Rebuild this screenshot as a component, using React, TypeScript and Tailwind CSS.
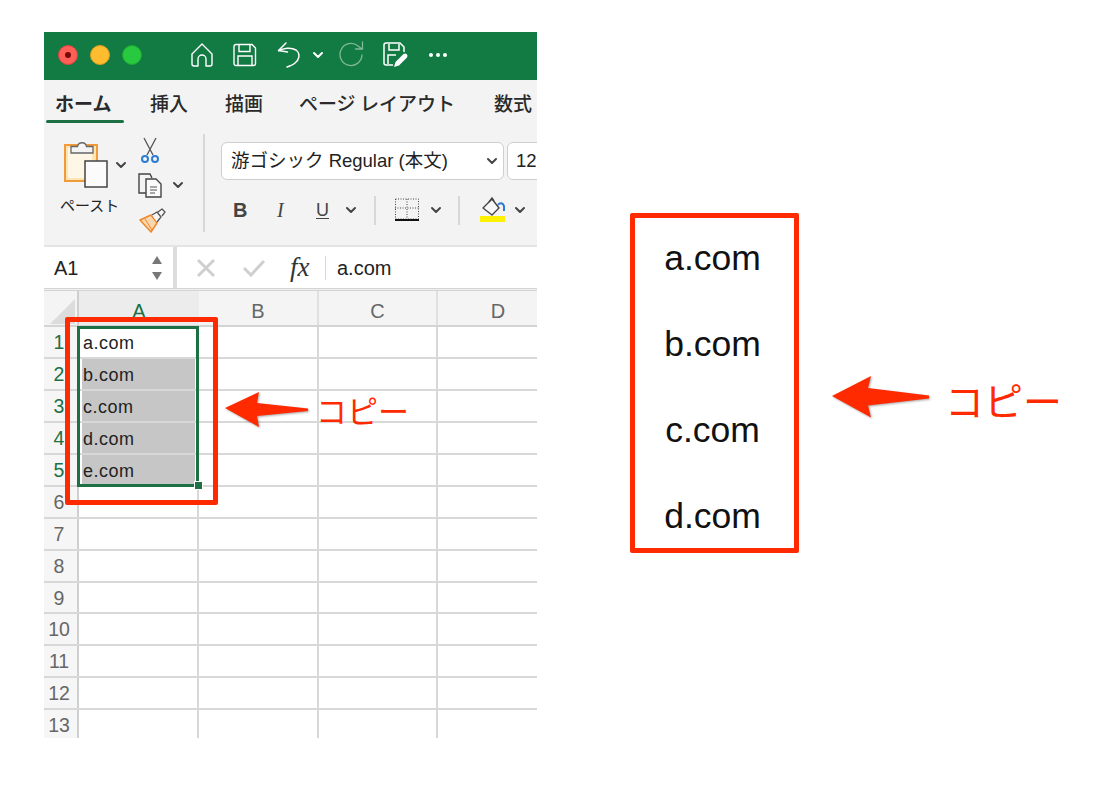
import React from "react";

const UI = "font-['Noto_Sans_CJK_JP',sans-serif]";
const LATIN = "font-['Liberation_Sans','Noto_Sans_CJK_JP',sans-serif]";

function Chevron({ className = "", color = "#444" }: { className?: string; color?: string }) {
  return (
    <svg width="12" height="8" viewBox="0 0 12 8" className={className}>
      <path d="M2 2l4 4 4-4" fill="none" stroke={color} strokeWidth="2" strokeLinecap="round" strokeLinejoin="round" />
    </svg>
  );
}

function TitleIcons() {
  return (
    <div className="flex items-center">
      <svg width="24" height="26" viewBox="0 0 24 26" className="ml-[48px]">
        <path d="M2 12L12 2l10 10v10a2 2 0 0 1-2 2h-4v-7a4 4 0 0 0-8 0v7H4a2 2 0 0 1-2-2z" fill="none" stroke="#fff" strokeWidth="1.4" strokeLinejoin="round" />
      </svg>
      <svg width="24" height="24" viewBox="0 0 24 24" className="ml-[19px]">
        <path d="M3 1.500h16l3.500 3.500v15.500a2 2 0 0 1-2 2H3a2 2 0 0 1-2-2v-17a2 2 0 0 1 2-2z" fill="none" stroke="#fff" strokeWidth="1.4" />
        <path d="M6 2v6.500h11V2M5 22v-9h14v9" fill="none" stroke="#fff" strokeWidth="1.4" />
      </svg>
      <svg width="26" height="28" viewBox="0 0 26 28" className="ml-[19px]">
        <path d="M10 2L2.500 9.500l9 1.500M3 10c4-3 12-4 17-1 5 4 3 10-1 13-2 2-5 3-8 4" fill="none" stroke="#fff" strokeWidth="1.500" strokeLinecap="round" strokeLinejoin="round" />
      </svg>
      <Chevron color="#fff" className="ml-[10px]" />
      <svg width="28" height="28" viewBox="0 0 28 28" className="ml-[14px]">
        <path d="M24 14a11 11 0 1 1-4-9l3.500 2.500M24.500 1v7h-7" fill="none" stroke="#7fb89a" strokeWidth="1.300" strokeLinecap="round" strokeLinejoin="round" />
      </svg>
      <svg width="26" height="26" viewBox="0 0 26 26" className="ml-[17px]">
        <path d="M10 23H3a2 2 0 0 1-2-2V3a2 2 0 0 1 2-2h14l4 4v5" fill="none" stroke="#fff" strokeWidth="1.500" />
        <path d="M6 2v6h10V2M5 22v-9h8" fill="none" stroke="#fff" strokeWidth="1.500" />
        <path d="M11 25l1.500-5 8-8a2.500 2.500 0 0 1 3.500 3.500l-8 8z" fill="#fff" />
      </svg>
      <div className="ml-[20px] flex gap-[3px]">
        <span className="w-[4px] h-[4px] rounded-full bg-white" />
        <span className="w-[4px] h-[4px] rounded-full bg-white" />
        <span className="w-[4px] h-[4px] rounded-full bg-white" />
      </div>
    </div>
  );
}

function ClipboardTools() {
  return (
    <div className="w-[159px] shrink-0 flex">
      <div className="w-[76px] ml-[16px] mt-[14px] flex flex-col">
        <div className="flex items-start">
          <svg width="48" height="50" viewBox="0 0 48 50" className="ml-[3px]">
            <rect x="2" y="6" width="32" height="36" fill="#fde6b4" stroke="#f29a3a" strokeWidth="2" />
            <rect x="5" y="9" width="24" height="30" fill="#fff7e6" />
            <rect x="22" y="22" width="22" height="26" fill="#fbfbfb" stroke="#444" strokeWidth="1.500" />
            <path d="M8 14V7.500h6.500c1-5 8-5 9 0H30V14z" fill="#f4f4f4" stroke="#666" strokeWidth="1.300" />
          </svg>
          <Chevron className="ml-[4px] mt-[22px]" />
        </div>
        <div className={`${UI} text-[15px] leading-[20px] text-[#222] mt-[6px] whitespace-nowrap`}>ペースト</div>
      </div>
      <div className="flex flex-col items-start ml-[-4px] mt-[12px]">
        <svg width="20" height="28" viewBox="0 0 20 28" className="ml-[8px]">
          <path d="M4 1l9 17M16 1L7 18" stroke="#555" strokeWidth="1.300" fill="none" />
          <circle cx="5" cy="22" r="3" fill="none" stroke="#2b7cd3" strokeWidth="2" />
          <circle cx="15" cy="22" r="3" fill="none" stroke="#2b7cd3" strokeWidth="2" />
        </svg>
        <div className="flex items-center mt-[6px] ml-[4px]">
          <svg width="28" height="28" viewBox="0 0 28 28">
            <path d="M10 22H3V3h11l2 4" fill="none" stroke="#444" strokeWidth="1.400" />
            <path d="M10 8h10l5 5v13H10z" fill="#fbfbfb" stroke="#444" strokeWidth="1.400" />
            <path d="M14 16h7M14 19h7M14 22h5" stroke="#555" strokeWidth="1.200" />
          </svg>
          <Chevron className="ml-[8px]" />
        </div>
        <svg width="28" height="26" viewBox="0 0 28 26" className="mt-[8px] ml-[7px]">
          <path d="M1 13l11-5 6 8-6 9z" fill="#fbd7ae" stroke="#f0862a" strokeWidth="1.500" strokeLinejoin="round" />
          <path d="M6 12l7 11" stroke="#f0862a" strokeWidth="1" />
          <path d="M13 8l5-3 4 5-4 5M19 5l4-3 3 3-3 4" fill="#f6f6f6" stroke="#555" strokeWidth="1.300" strokeLinejoin="round" />
        </svg>
      </div>
    </div>
  );
}

function FontTools() {
  return (
    <div className="flex-1 min-w-0 ml-[16px] pt-[17px] overflow-hidden">
      <div className="flex gap-[3px]">
        <div className={`${LATIN} w-[283px] h-[38px] shrink-0 rounded-[6px] border border-[#cfcfcf] bg-white flex items-center justify-between pl-[9px] pr-[5px] text-[18.500px] text-[#222]`}>
          <span>游ゴシック Regular (本文)</span>
          <Chevron />
        </div>
        <div className={`${LATIN} w-[60px] h-[38px] shrink-0 rounded-[6px] border border-[#cfcfcf] bg-white pl-[8px] flex items-center text-[18.500px] text-[#222]`}>12</div>
      </div>
      <div className="flex items-center h-[46px] mt-[7px] relative">
        <span className={`${LATIN} ml-[12px] text-[20px] font-bold text-[#444] w-[16px]`}>B</span>
        <span className="font-['Liberation_Serif',serif] ml-[28px] text-[20px] italic text-[#444] w-[10px]">I</span>
        <span className={`${LATIN} ml-[29px] text-[18px] text-[#444] underline underline-offset-2 w-[16px]`}>U</span>
        <Chevron className="ml-[13px]" />
        <span className="ml-[17px] w-[2px] h-[29px] bg-[#d8d8d8]" />
        <svg width="26" height="26" viewBox="0 0 26 26" className="ml-[18px]">
          <rect x="1.500" y="2" width="23" height="20" fill="none" stroke="#444" strokeWidth="1" strokeDasharray="1 1.500" />
          <path d="M13 2v20M1 11h24" stroke="#444" strokeWidth="1" strokeDasharray="1 1.500" />
          <path d="M1 23h24" stroke="#111" strokeWidth="2" />
        </svg>
        <Chevron className="ml-[10px]" />
        <span className="ml-[16px] w-[2px] h-[29px] bg-[#d8d8d8]" />
        <svg width="28" height="28" viewBox="0 0 28 28" className="ml-[19px]">
          <path d="M4 12L13 3l7 9-7 7z" fill="#f8f8f8" stroke="#444" strokeWidth="1.400" strokeLinejoin="round" />
          <path d="M10 6l3-4 2 3" fill="none" stroke="#444" strokeWidth="1.400" />
          <path d="M19 9c2-3 5-2 6 1v5" fill="none" stroke="#2b7cd3" strokeWidth="2" />
          <rect x="1" y="20" width="25" height="6" fill="#fff200" />
        </svg>
        <Chevron className="ml-[7px]" />
      </div>
    </div>
  );
}

function FormulaBar() {
  return (
    <div className="h-[41px] shrink-0 flex bg-white">
      <div className={`${LATIN} w-[129px] shrink-0 flex items-center justify-between pl-[10px] pr-[10px] text-[20px] text-[#222]`}>
        <span>A1</span>
        <svg width="12" height="28" viewBox="0 0 12 28">
          <path d="M6 2l5 8H1zM1 18h10l-5 8z" fill="#777" />
        </svg>
      </div>
      <div className="w-[4px] shrink-0 bg-[#dcdcdc]" />
      <div className="flex-1 flex items-center">
        <svg width="20" height="20" viewBox="0 0 20 20" className="ml-[19px]">
          <path d="M2 2l16 16M18 2L2 18" stroke="#cfcfcf" strokeWidth="3" />
        </svg>
        <svg width="24" height="18" viewBox="0 0 24 18" className="ml-[26px]">
          <path d="M2 9l7 7L22 2" fill="none" stroke="#cfcfcf" strokeWidth="3" />
        </svg>
        <span className="font-['Liberation_Serif',serif] italic text-[27px] text-[#333] ml-[24px] w-[25px] leading-none">fx</span>
        <span className="ml-[10px] w-[1px] h-[24px] bg-[#d8d8d8]" />
        <span className={`${LATIN} ml-[11px] text-[20px] text-[#222]`}>a.com</span>
      </div>
    </div>
  );
}

const rows: { n: number; text?: string; tall: boolean }[] = [
  { n: 1, text: "a.com", tall: true },
  { n: 2, text: "b.com", tall: true },
  { n: 3, text: "c.com", tall: true },
  { n: 4, text: "d.com", tall: true },
  { n: 5, text: "e.com", tall: true },
  { n: 6, tall: true },
  { n: 7, tall: true },
  { n: 8, tall: true },
  { n: 9, tall: false },
  { n: 10, tall: true },
  { n: 11, tall: true },
  { n: 12, tall: true },
  { n: 13, tall: true },
];

function Sheet() {
  return (
    <div className="relative flex-1 min-h-0 overflow-hidden">
      <div className="h-[36px] flex bg-[#f4f4f4] border-b-2 border-[#d4d4d4]">
        <div className="w-[35px] shrink-0 border-r-2 border-[#cfcfcf] relative">
          <svg width="26" height="26" viewBox="0 0 26 26" className="absolute right-[1px] bottom-0">
            <path d="M25 0v25H0z" fill="#dcdcdc" />
          </svg>
        </div>
        <div className={`${LATIN} w-[120px] shrink-0 bg-[#ececec] flex items-center justify-center text-[20px] text-[#1c7044] pt-[5px]`}>A</div>
        <div className={`${LATIN} w-[120px] shrink-0 border-r-2 border-[#e0e0e0] flex items-center justify-center text-[20px] text-[#666] pt-[5px]`}>B</div>
        <div className={`${LATIN} w-[119px] shrink-0 border-r-2 border-[#e0e0e0] flex items-center justify-center text-[20px] text-[#666] pt-[5px]`}>C</div>
        <div className={`${LATIN} w-[120px] shrink-0 flex items-center justify-center text-[20px] text-[#666] pt-[5px]`}>D</div>
      </div>
      {rows.map((r) => (
        <div key={r.n} className={`flex border-b-2 border-[#d8d8d8] ${r.tall ? "h-[32px]" : "h-[31px]"}`}>
          <div className={`${LATIN} w-[35px] shrink-0 bg-[#f6f6f6] border-r-2 border-[#cfcfcf] flex items-center justify-center text-[19.500px] pr-[3px] pt-[2px] ${r.n <= 5 ? "text-[#1c7044]" : "text-[#666]"}`}>
            {r.n}
          </div>
          <div className="w-[120px] shrink-0 border-r-2 border-[#d8d8d8] pl-[3px] pr-[2px]">
            {r.text && (
              <div className={`${LATIN} h-full flex items-center pl-[1px] pt-[2px] text-[18px] tracking-[0.5px] text-[#222] ${r.n > 1 ? "bg-[#c6c6c6]" : ""}`}>
                {r.text}
              </div>
            )}
          </div>
          <div className="w-[120px] shrink-0 border-r-2 border-[#d8d8d8]" />
          <div className="w-[119px] shrink-0 border-r-2 border-[#d8d8d8]" />
        </div>
      ))}
      <div className="absolute left-[33px] top-[35px] w-[122px] h-[161px] border-[3px] border-[#1c7044]" />
      <div className="absolute left-[150px] top-[190px] w-[9px] h-[9px] bg-[#1c7044] border border-white" />
    </div>
  );
}

function Arrow({ small }: { small?: boolean }) {
  return small ? (
    <svg width="90" height="40" viewBox="0 0 90 40" className="absolute left-[222px] top-[390px] drop-shadow-[1px_1px_1px_rgba(0,0,0,0.35)]">
      <path d="M3 18L37 2l-2 11 51 5.500v2.500l-51 5 2 11z" fill="#ff2a00" />
    </svg>
  ) : (
    <svg width="104" height="46" viewBox="0 0 104 46" className="absolute left-[829px] top-[374px] drop-shadow-[1px_1px_1px_rgba(0,0,0,0.35)]">
      <path d="M3 22L42 2l-3 12 61 7.500v3l-61 7 3 12z" fill="#ff2a00" />
    </svg>
  );
}

export default function App() {
  return (
    <div className="relative w-[1114px] h-[786px] bg-white overflow-hidden flex items-start">
      <div className="ml-[44px] mt-[32px] w-[493px] h-[706px] flex flex-col shrink-0">
        <div className="h-[48px] shrink-0 bg-[#127a43] flex items-center pl-[14px] pb-[3px]">
          <span className="w-[20px] h-[20px] rounded-full bg-[#ff5f57] border border-[#d9443e] flex items-center justify-center">
            <span className="w-[6px] h-[6px] rounded-full bg-[#7a0a05]" />
          </span>
          <span className="ml-[12px] w-[20px] h-[20px] rounded-full bg-[#febc2e] border border-[#d99e20]" />
          <span className="ml-[12px] w-[20px] h-[20px] rounded-full bg-[#28c840] border border-[#1ea532]" />
          <TitleIcons />
        </div>

        <div className="h-[167px] shrink-0 bg-[#f3f3f3] flex flex-col border-b-2 border-[#e4e4e4]">
          <div className={`${UI} h-[45px] relative flex items-center text-[19px] text-[#2a2a2a] whitespace-nowrap overflow-hidden pt-[1px]`}>
            <span className="ml-[11px] font-bold w-[58px]">ホーム</span>
            <span className="ml-[37px] w-[38px] font-medium">挿入</span>
            <span className="ml-[37px] w-[38px] font-medium">描画</span>
            <span className="ml-[36px] w-[157px] font-medium">ページ レイアウト</span>
            <span className="ml-[38px] font-medium">数式</span>
            <span className="absolute left-[2px] top-[40px] w-[78px] h-[3px] rounded-full bg-[#1c7044]" />
          </div>
          <div className="flex-1 flex">
            <ClipboardTools />
            <div className="w-[2px] h-[98px] mt-[9px] bg-[#d8d8d8] shrink-0" />
            <FontTools />
          </div>
        </div>

        <FormulaBar />
        <div className="h-[3px] shrink-0 border-y border-[#d4d4d4] bg-[#f0f0f0]" />
        <Sheet />
      </div>

      <div className={`${LATIN} ml-[93px] mt-[213px] w-[169px] h-[340px] border-[5px] border-[#ff2a00] rounded-[2px] flex flex-col items-center gap-[42px] pt-[18px] pr-[4px] text-[35.500px] leading-[44px] text-[#111] shrink-0`}>
        <span>a.com</span>
        <span>b.com</span>
        <span>c.com</span>
        <span>d.com</span>
      </div>

      <div className="absolute left-[65px] top-[317px] w-[153px] h-[188px] border-[5px] border-[#ff2a00] rounded-[2px]" />
      <Arrow small />
      <span className={`${UI} absolute left-[316px] top-[388px] text-[31px] leading-[44px] text-[#ff2a00]`}>コピー</span>
      <Arrow />
      <span className={`${UI} absolute left-[945px] top-[373px] text-[39px] leading-[52px] text-[#ff2a00]`}>コピー</span>
    </div>
  );
}
